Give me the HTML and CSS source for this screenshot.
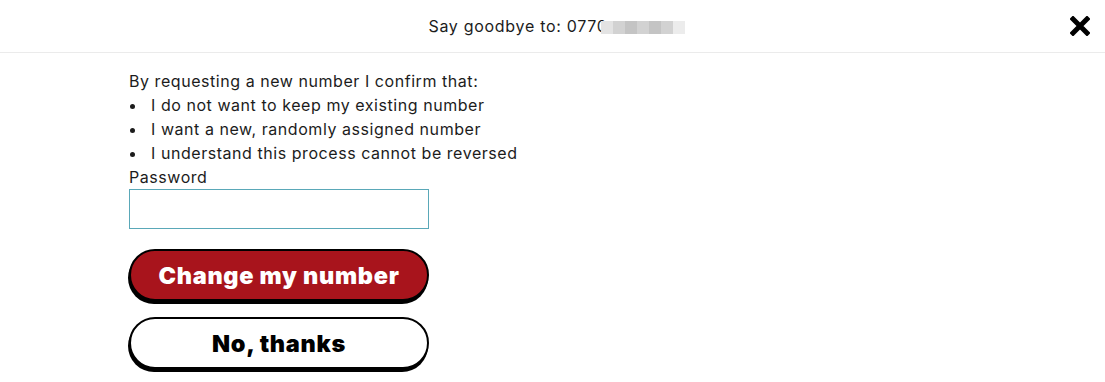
FILE: index.html
```html
<!DOCTYPE html>
<html lang="en">
<head>
    <meta charset="UTF-8">
    <title>Change number</title>
    <link rel="stylesheet" href="styles.css">
</head>
<body>
    <div class="header">
        <div class="title">Say goodbye to: 0770<span class="blur"><span class="px a"></span><span class="px b"></span><span class="px c"></span><span class="px b"></span><span class="px c"></span><span class="px b"></span><span class="px d"></span></span></div>
        <button class="close" aria-label="Close">
            <svg width="20" height="20" viewBox="0 0 20 20"><path d="M3 3 L17 17 M17 3 L3 17" stroke="#000" stroke-width="5" stroke-linecap="square"/></svg>
        </button>
    </div>
    <div class="content">
        <p class="intro">By requesting a new number I confirm that:</p>
        <ul class="list">
            <li>I do not want to keep my existing number</li>
            <li>I want a new, randomly assigned number</li>
            <li>I understand this process cannot be reversed</li>
        </ul>
        <label class="label" for="pw">Password</label>
        <input class="input" id="pw" type="password" autofocus>
        <button class="btn primary">Change my number</button>
        <button class="btn secondary">No, thanks</button>
    </div>
</body>
</html>
```

FILE: styles.css
```css
body {
    margin: 0;
    background: #fff;
    color: #1c1c1c;
    font-family: Inter, "Open Sans", sans-serif;
    font-size: 16px;
    letter-spacing: 0.55px;
}
.header {
    height: 52px;
    border-bottom: 1px solid #ebebeb;
    display: flex;
    align-items: center;
    justify-content: center;
    position: relative;
}
.title {
    font-size: 16px;
    letter-spacing: 0.7px;
    display: flex;
    align-items: center;
    padding-left: 8px;
}
.blur {
    display: inline-flex;
    height: 13px;
    margin: 2px 0 0 -7px;
    position: relative;
}
.px {
    width: 12px;
    height: 13px;
}
.px.a { background: #e3e3e3; }
.px.b { background: #d2d2d2; }
.px.c { background: #c4c4c4; }
.px.d { background: #ececec; }
.close {
    position: absolute;
    right: 15px;
    top: 16px;
    border: none;
    background: none;
    padding: 0;
    cursor: pointer;
}
.content {
    padding: 16px 0 0 129px;
    width: 300px;
    display: flex;
    flex-direction: column;
    align-items: flex-start;
}
.intro {
    margin: 0;
    line-height: 24px;
    white-space: nowrap;
}
.list {
    margin: 0;
    padding: 0;
    list-style: none;
    line-height: 24px;
    white-space: nowrap;
}
.list li {
    display: flex;
    align-items: center;
}
.list li::before {
    content: "";
    width: 5px;
    height: 5px;
    border-radius: 50%;
    background: #1c1c1c;
    margin: 2px 16px 0 1px;
}
.label {
    line-height: 24px;
}
.input {
    box-sizing: border-box;
    width: 300px;
    height: 40px;
    margin: 0 0 20px;
    border: 1px solid #5aa8b8;
    outline: none;
    font-size: 16px;
    padding: 0 6px;
}
.btn {
    box-sizing: border-box;
    width: 300px;
    height: 52px;
    padding-top: 2px;
    border: 2px solid #000;
    border-radius: 26px;
    box-shadow: -1px 3px 0 #000;
    font-family: Inter, sans-serif;
    font-weight: 900;
    font-size: 23.5px;
    letter-spacing: 0.7px;
    cursor: pointer;
    margin-bottom: 16px;
}
.btn.primary {
    background: #a8141c;
    color: #fff;
}
.btn.secondary {
    background: #fff;
    color: #000;
}
```
